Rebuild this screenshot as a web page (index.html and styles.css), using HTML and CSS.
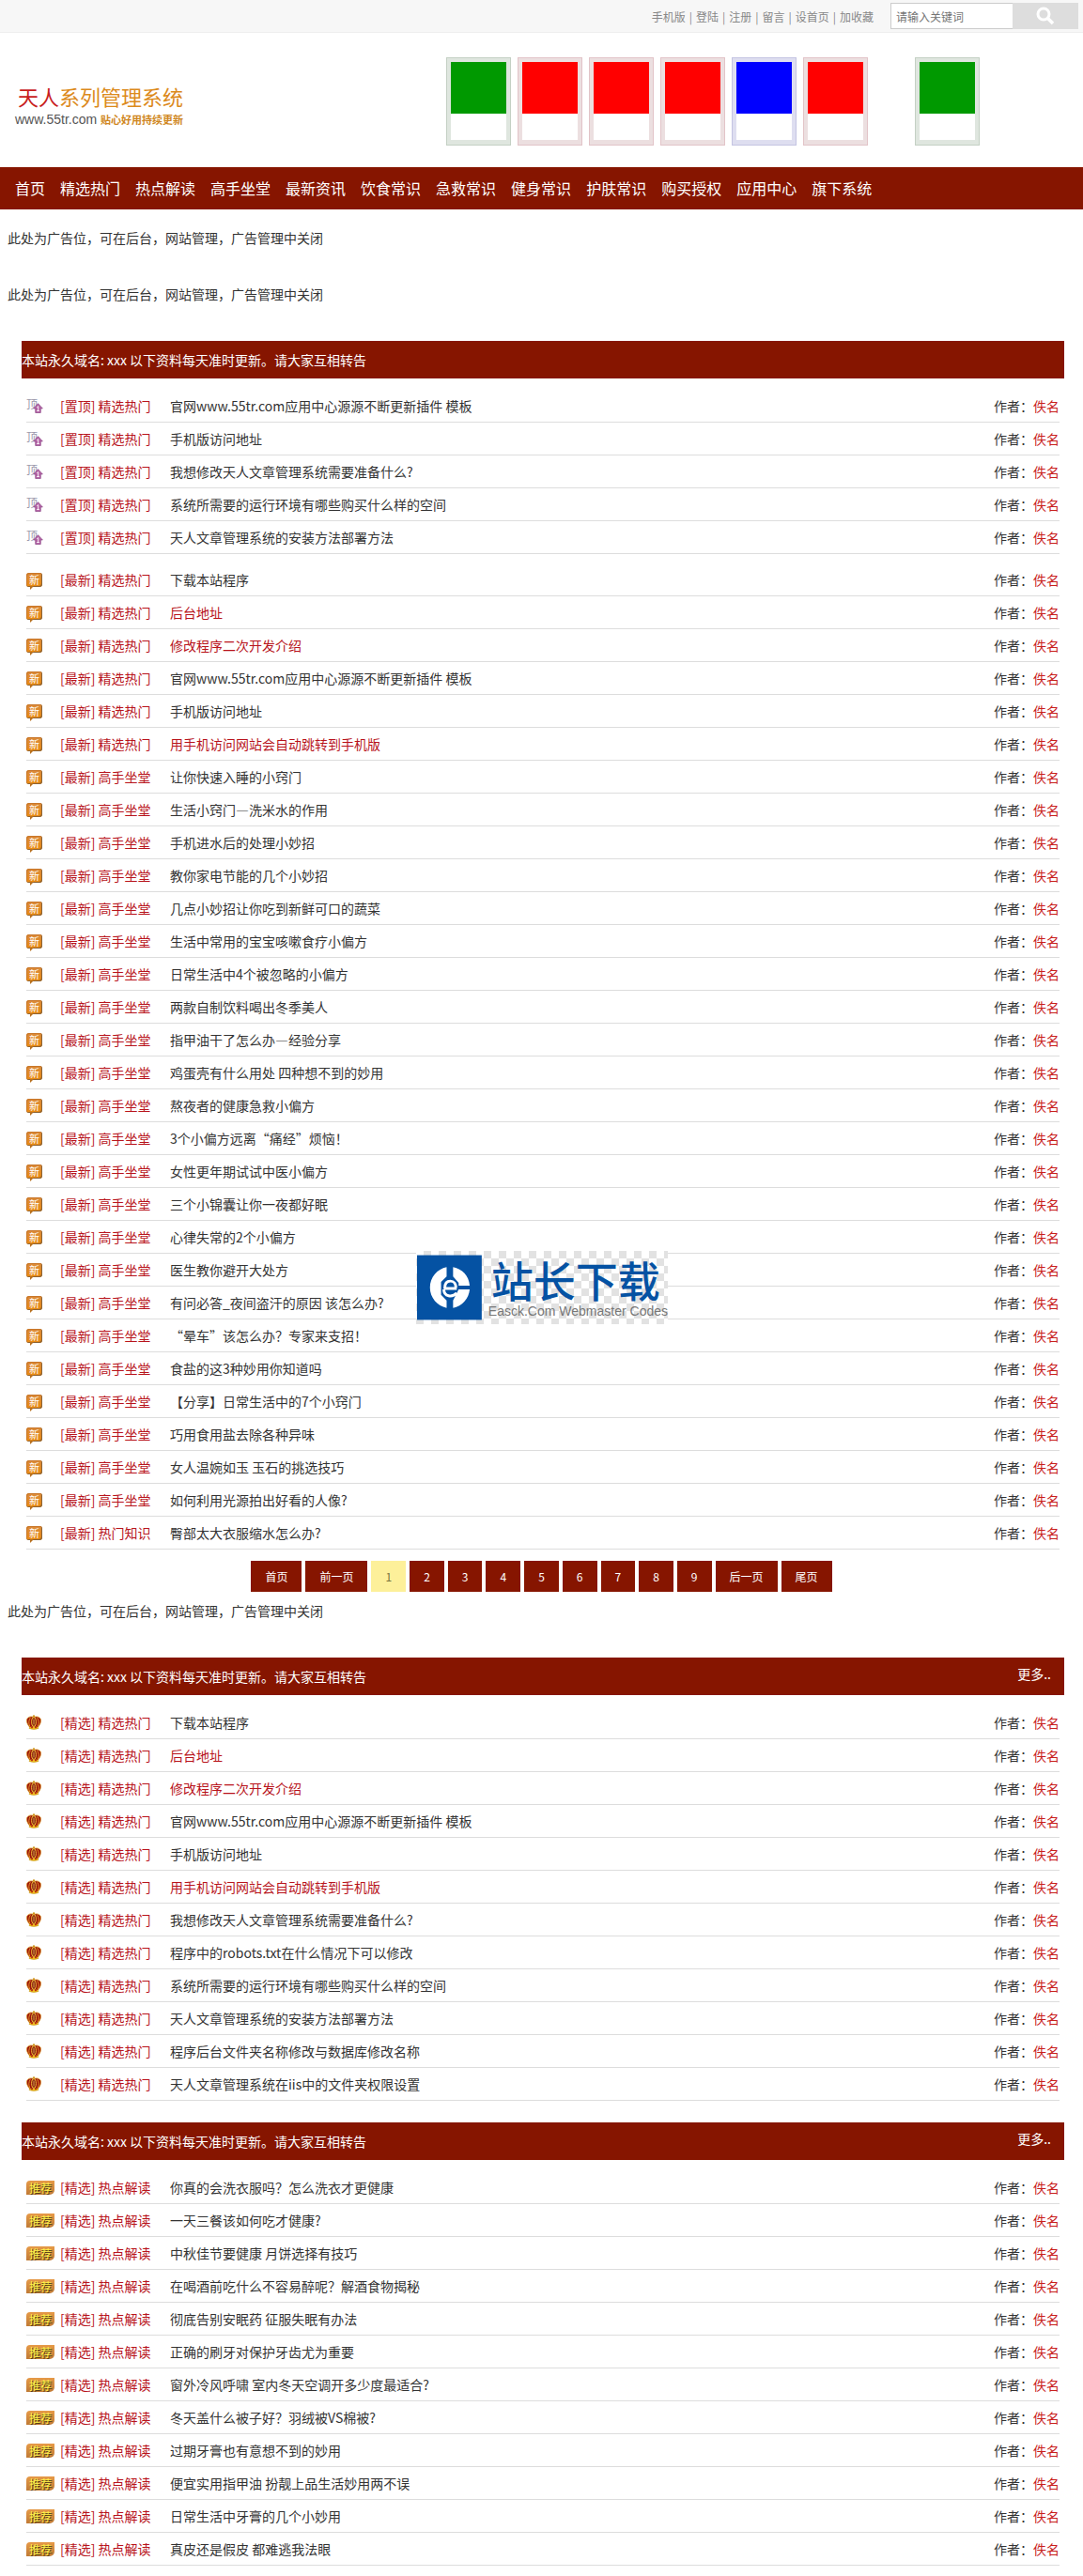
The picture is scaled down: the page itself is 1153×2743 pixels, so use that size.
FILE: index.html
```html
<!DOCTYPE html>
<html lang="zh-CN">
<head>
    <meta charset="UTF-8">
    <meta name="viewport" content="width=device-width, initial-scale=1.0">
    <title>天人系列管理系统</title>
    <link rel="stylesheet" href="styles.css">
</head>
<body>
    <!-- iconos -->
    <svg class="sprite" aria-hidden="true">
        <symbol id="ico-up" viewBox="0 0 12 12">
            <path d="M6 .7 11.300 6.500H9v5H3v-5H.7z" fill="#b565a7" stroke="#8c4585" stroke-width=".8"/>
            <path d="M4.800 5l1.400-1v5M4.500 9.300h3" fill="none" stroke="#fff" stroke-width="1"/>
        </symbol>
        <symbol id="ico-crown" viewBox="0 0 16 16">
            <path d="M4 12h8l1 2.500q-5 2-10 0z" fill="#f2c21c" stroke="#b98a10" stroke-width=".5"/>
            <path d="M3.500 13C1.200 10.500-.2 7 .7 4.500 2 1.800 5.500 1.300 8 2.500c2.500-1.200 6-.7 7.300 2 .9 2.500-.5 6-2.800 8.500z" fill="#9c120c" stroke="#e0a020" stroke-width=".7"/>
            <path d="M3.700 12C2.300 9 2.500 6 4.300 3.200M12.300 12c1.400-3 1.200-6-.6-8.800" fill="none" stroke="#f0b828" stroke-width=".8"/>
            <ellipse cx="8" cy="7.500" rx="2.300" ry="4.800" fill="#7c0d08" stroke="#f6cc3c" stroke-width="1"/>
            <path d="M8 4.500v6" stroke="#f8de6a" stroke-width=".8"/>
            <circle cx="8" cy="1.300" r="1.100" fill="#c98f12"/>
            <path d="M5 13.700h2M9 13.700h2" stroke="#b3160c"/>
        </symbol>
    </svg>

    <div class="topbar">
        <div class="toplinks">
            <a href="#">手机版</a><span>|</span><a href="#">登陆</a><span>|</span><a href="#">注册</a><span>|</span><a href="#">留言</a><span>|</span><a href="#">设首页</a><span>|</span><a href="#">加收藏</a>
        </div>
        <form class="search">
            <input type="text" placeholder="请输入关键词" aria-label="请输入关键词">
            <button type="button" aria-label="搜索">
                <svg width="20" height="20" viewBox="0 0 20 20"><circle cx="8" cy="8" r="6" fill="none" stroke="#fff" stroke-width="3"/><path d="M12.500 12.500 18 18" stroke="#fff" stroke-width="3.500"/></svg>
            </button>
        </form>
    </div>

    <div class="header">
        <div class="logo">
            <div class="logo-name"><span>天人</span>系列管理系统</div>
            <div class="logo-sub">www.55tr.com <b>贴心好用持续更新</b></div>
        </div>
        <div class="cards">
            <div class="card green"><i></i></div>
            <div class="card red"><i></i></div>
            <div class="card red"><i></i></div>
            <div class="card red"><i></i></div>
            <div class="card blue"><i></i></div>
            <div class="card red"><i></i></div>
            <div class="card green last"><i></i></div>
        </div>
    </div>

    <div class="nav">
        <a href="#">首页</a>
        <a href="#">精选热门</a>
        <a href="#">热点解读</a>
        <a href="#">高手坐堂</a>
        <a href="#">最新资讯</a>
        <a href="#">饮食常识</a>
        <a href="#">急救常识</a>
        <a href="#">健身常识</a>
        <a href="#">护肤常识</a>
        <a href="#">购买授权</a>
        <a href="#">应用中心</a>
        <a href="#">旗下系统</a>
    </div>

    <div class="main">
        <div class="ad">此处为广告位，可在后台，网站管理，广告管理中关闭</div>
        <div class="ad">此处为广告位，可在后台，网站管理，广告管理中关闭</div>

        <div class="panel">
            <div class="title"><h2>本站永久域名: xxx 以下资料每天准时更新。请大家互相转告</h2></div>
            <ul class="list">
                <li><i class="ico top">顶<svg><use href="#ico-up"/></svg></i><a class="cat" href="#">[置顶] 精选热门</a><a class="name" href="#">官网www.55tr.com应用中心源源不断更新插件 模板</a><span class="author">作者：<a href="#">佚名</a></span></li>
                <li><i class="ico top">顶<svg><use href="#ico-up"/></svg></i><a class="cat" href="#">[置顶] 精选热门</a><a class="name" href="#">手机版访问地址</a><span class="author">作者：<a href="#">佚名</a></span></li>
                <li><i class="ico top">顶<svg><use href="#ico-up"/></svg></i><a class="cat" href="#">[置顶] 精选热门</a><a class="name" href="#">我想修改天人文章管理系统需要准备什么?</a><span class="author">作者：<a href="#">佚名</a></span></li>
                <li><i class="ico top">顶<svg><use href="#ico-up"/></svg></i><a class="cat" href="#">[置顶] 精选热门</a><a class="name" href="#">系统所需要的运行环境有哪些购买什么样的空间</a><span class="author">作者：<a href="#">佚名</a></span></li>
                <li><i class="ico top">顶<svg><use href="#ico-up"/></svg></i><a class="cat" href="#">[置顶] 精选热门</a><a class="name" href="#">天人文章管理系统的安装方法部署方法</a><span class="author">作者：<a href="#">佚名</a></span></li>
            </ul>
            <ul class="list latest">
                <li><i class="ico new">新</i><a class="cat" href="#">[最新] 精选热门</a><a class="name" href="#">下载本站程序</a><span class="author">作者：<a href="#">佚名</a></span></li>
                <li><i class="ico new">新</i><a class="cat" href="#">[最新] 精选热门</a><a class="name hot" href="#">后台地址</a><span class="author">作者：<a href="#">佚名</a></span></li>
                <li><i class="ico new">新</i><a class="cat" href="#">[最新] 精选热门</a><a class="name hot" href="#">修改程序二次开发介绍</a><span class="author">作者：<a href="#">佚名</a></span></li>
                <li><i class="ico new">新</i><a class="cat" href="#">[最新] 精选热门</a><a class="name" href="#">官网www.55tr.com应用中心源源不断更新插件 模板</a><span class="author">作者：<a href="#">佚名</a></span></li>
                <li><i class="ico new">新</i><a class="cat" href="#">[最新] 精选热门</a><a class="name" href="#">手机版访问地址</a><span class="author">作者：<a href="#">佚名</a></span></li>
                <li><i class="ico new">新</i><a class="cat" href="#">[最新] 精选热门</a><a class="name hot" href="#">用手机访问网站会自动跳转到手机版</a><span class="author">作者：<a href="#">佚名</a></span></li>
                <li><i class="ico new">新</i><a class="cat" href="#">[最新] 高手坐堂</a><a class="name" href="#">让你快速入睡的小窍门</a><span class="author">作者：<a href="#">佚名</a></span></li>
                <li><i class="ico new">新</i><a class="cat" href="#">[最新] 高手坐堂</a><a class="name" href="#">生活小窍门—洗米水的作用</a><span class="author">作者：<a href="#">佚名</a></span></li>
                <li><i class="ico new">新</i><a class="cat" href="#">[最新] 高手坐堂</a><a class="name" href="#">手机进水后的处理小妙招</a><span class="author">作者：<a href="#">佚名</a></span></li>
                <li><i class="ico new">新</i><a class="cat" href="#">[最新] 高手坐堂</a><a class="name" href="#">教你家电节能的几个小妙招</a><span class="author">作者：<a href="#">佚名</a></span></li>
                <li><i class="ico new">新</i><a class="cat" href="#">[最新] 高手坐堂</a><a class="name" href="#">几点小妙招让你吃到新鲜可口的蔬菜</a><span class="author">作者：<a href="#">佚名</a></span></li>
                <li><i class="ico new">新</i><a class="cat" href="#">[最新] 高手坐堂</a><a class="name" href="#">生活中常用的宝宝咳嗽食疗小偏方</a><span class="author">作者：<a href="#">佚名</a></span></li>
                <li><i class="ico new">新</i><a class="cat" href="#">[最新] 高手坐堂</a><a class="name" href="#">日常生活中4个被忽略的小偏方</a><span class="author">作者：<a href="#">佚名</a></span></li>
                <li><i class="ico new">新</i><a class="cat" href="#">[最新] 高手坐堂</a><a class="name" href="#">两款自制饮料喝出冬季美人</a><span class="author">作者：<a href="#">佚名</a></span></li>
                <li><i class="ico new">新</i><a class="cat" href="#">[最新] 高手坐堂</a><a class="name" href="#">指甲油干了怎么办—经验分享</a><span class="author">作者：<a href="#">佚名</a></span></li>
                <li><i class="ico new">新</i><a class="cat" href="#">[最新] 高手坐堂</a><a class="name" href="#">鸡蛋壳有什么用处 四种想不到的妙用</a><span class="author">作者：<a href="#">佚名</a></span></li>
                <li><i class="ico new">新</i><a class="cat" href="#">[最新] 高手坐堂</a><a class="name" href="#">熬夜者的健康急救小偏方</a><span class="author">作者：<a href="#">佚名</a></span></li>
                <li><i class="ico new">新</i><a class="cat" href="#">[最新] 高手坐堂</a><a class="name" href="#">3个小偏方远离“痛经”烦恼！</a><span class="author">作者：<a href="#">佚名</a></span></li>
                <li><i class="ico new">新</i><a class="cat" href="#">[最新] 高手坐堂</a><a class="name" href="#">女性更年期试试中医小偏方</a><span class="author">作者：<a href="#">佚名</a></span></li>
                <li><i class="ico new">新</i><a class="cat" href="#">[最新] 高手坐堂</a><a class="name" href="#">三个小锦囊让你一夜都好眠</a><span class="author">作者：<a href="#">佚名</a></span></li>
                <li><i class="ico new">新</i><a class="cat" href="#">[最新] 高手坐堂</a><a class="name" href="#">心律失常的2个小偏方</a><span class="author">作者：<a href="#">佚名</a></span></li>
                <li><i class="ico new">新</i><a class="cat" href="#">[最新] 高手坐堂</a><a class="name" href="#">医生教你避开大处方</a><span class="author">作者：<a href="#">佚名</a></span></li>
                <li><i class="ico new">新</i><a class="cat" href="#">[最新] 高手坐堂</a><a class="name" href="#">有问必答_夜间盗汗的原因 该怎么办?</a><span class="author">作者：<a href="#">佚名</a></span></li>
                <li><i class="ico new">新</i><a class="cat" href="#">[最新] 高手坐堂</a><a class="name" href="#">“晕车”该怎么办？专家来支招！</a><span class="author">作者：<a href="#">佚名</a></span></li>
                <li><i class="ico new">新</i><a class="cat" href="#">[最新] 高手坐堂</a><a class="name" href="#">食盐的这3种妙用你知道吗</a><span class="author">作者：<a href="#">佚名</a></span></li>
                <li><i class="ico new">新</i><a class="cat" href="#">[最新] 高手坐堂</a><a class="name" href="#">【分享】日常生活中的7个小窍门</a><span class="author">作者：<a href="#">佚名</a></span></li>
                <li><i class="ico new">新</i><a class="cat" href="#">[最新] 高手坐堂</a><a class="name" href="#">巧用食用盐去除各种异味</a><span class="author">作者：<a href="#">佚名</a></span></li>
                <li><i class="ico new">新</i><a class="cat" href="#">[最新] 高手坐堂</a><a class="name" href="#">女人温婉如玉 玉石的挑选技巧</a><span class="author">作者：<a href="#">佚名</a></span></li>
                <li><i class="ico new">新</i><a class="cat" href="#">[最新] 高手坐堂</a><a class="name" href="#">如何利用光源拍出好看的人像?</a><span class="author">作者：<a href="#">佚名</a></span></li>
                <li><i class="ico new">新</i><a class="cat" href="#">[最新] 热门知识</a><a class="name" href="#">臀部太大衣服缩水怎么办?</a><span class="author">作者：<a href="#">佚名</a></span></li>
            </ul>
            <div class="stamp">
                <svg width="70" height="70" viewBox="0 0 70 70">
                    <rect width="70" height="70" fill="#0552a3"/>
                    <path d="M32 13C22 15 14 24 14 35s8 20 18 22v-8l-6-6V29l6-6z" fill="#fff"/>
                    <path d="M39 13v10l6 7v3h12C56 22 49 15 39 13zM57 37H45l-6 12v8c10-2 17-10 18-20z" fill="#fff"/>
                    <path d="M43 36H29M30 36c0-5 2-8 6-8s6 3 6 7M29 37c0 8 9 9 14 4" fill="none" stroke="#fff" stroke-width="3"/>
                </svg>
                <div class="stamp-text">
                    <strong>站长下载</strong>
                    <span>Easck.Com Webmaster Codes</span>
                </div>
            </div>
        </div>

        <div class="pager">
            <a href="#">首页</a>
            <a href="#">前一页</a>
            <a href="#" class="on">1</a>
            <a href="#">2</a>
            <a href="#">3</a>
            <a href="#">4</a>
            <a href="#">5</a>
            <a href="#">6</a>
            <a href="#">7</a>
            <a href="#">8</a>
            <a href="#">9</a>
            <a href="#">后一页</a>
            <a href="#">尾页</a>
        </div>

        <div class="ad">此处为广告位，可在后台，网站管理，广告管理中关闭</div>

        <div class="panel">
            <div class="title"><h2>本站永久域名: xxx 以下资料每天准时更新。请大家互相转告</h2><a href="#">更多..</a></div>
            <ul class="list">
                <li><svg class="ico"><use href="#ico-crown"/></svg><a class="cat" href="#">[精选] 精选热门</a><a class="name" href="#">下载本站程序</a><span class="author">作者：<a href="#">佚名</a></span></li>
                <li><svg class="ico"><use href="#ico-crown"/></svg><a class="cat" href="#">[精选] 精选热门</a><a class="name hot" href="#">后台地址</a><span class="author">作者：<a href="#">佚名</a></span></li>
                <li><svg class="ico"><use href="#ico-crown"/></svg><a class="cat" href="#">[精选] 精选热门</a><a class="name hot" href="#">修改程序二次开发介绍</a><span class="author">作者：<a href="#">佚名</a></span></li>
                <li><svg class="ico"><use href="#ico-crown"/></svg><a class="cat" href="#">[精选] 精选热门</a><a class="name" href="#">官网www.55tr.com应用中心源源不断更新插件 模板</a><span class="author">作者：<a href="#">佚名</a></span></li>
                <li><svg class="ico"><use href="#ico-crown"/></svg><a class="cat" href="#">[精选] 精选热门</a><a class="name" href="#">手机版访问地址</a><span class="author">作者：<a href="#">佚名</a></span></li>
                <li><svg class="ico"><use href="#ico-crown"/></svg><a class="cat" href="#">[精选] 精选热门</a><a class="name hot" href="#">用手机访问网站会自动跳转到手机版</a><span class="author">作者：<a href="#">佚名</a></span></li>
                <li><svg class="ico"><use href="#ico-crown"/></svg><a class="cat" href="#">[精选] 精选热门</a><a class="name" href="#">我想修改天人文章管理系统需要准备什么?</a><span class="author">作者：<a href="#">佚名</a></span></li>
                <li><svg class="ico"><use href="#ico-crown"/></svg><a class="cat" href="#">[精选] 精选热门</a><a class="name" href="#">程序中的robots.txt在什么情况下可以修改</a><span class="author">作者：<a href="#">佚名</a></span></li>
                <li><svg class="ico"><use href="#ico-crown"/></svg><a class="cat" href="#">[精选] 精选热门</a><a class="name" href="#">系统所需要的运行环境有哪些购买什么样的空间</a><span class="author">作者：<a href="#">佚名</a></span></li>
                <li><svg class="ico"><use href="#ico-crown"/></svg><a class="cat" href="#">[精选] 精选热门</a><a class="name" href="#">天人文章管理系统的安装方法部署方法</a><span class="author">作者：<a href="#">佚名</a></span></li>
                <li><svg class="ico"><use href="#ico-crown"/></svg><a class="cat" href="#">[精选] 精选热门</a><a class="name" href="#">程序后台文件夹名称修改与数据库修改名称</a><span class="author">作者：<a href="#">佚名</a></span></li>
                <li><svg class="ico"><use href="#ico-crown"/></svg><a class="cat" href="#">[精选] 精选热门</a><a class="name" href="#">天人文章管理系统在iis中的文件夹权限设置</a><span class="author">作者：<a href="#">佚名</a></span></li>
            </ul>
        </div>

        <div class="panel">
            <div class="title"><h2>本站永久域名: xxx 以下资料每天准时更新。请大家互相转告</h2><a href="#">更多..</a></div>
            <ul class="list">
                <li><i class="ico rec">推荐</i><a class="cat" href="#">[精选] 热点解读</a><a class="name" href="#">你真的会洗衣服吗？怎么洗衣才更健康</a><span class="author">作者：<a href="#">佚名</a></span></li>
                <li><i class="ico rec">推荐</i><a class="cat" href="#">[精选] 热点解读</a><a class="name" href="#">一天三餐该如何吃才健康?</a><span class="author">作者：<a href="#">佚名</a></span></li>
                <li><i class="ico rec">推荐</i><a class="cat" href="#">[精选] 热点解读</a><a class="name" href="#">中秋佳节要健康 月饼选择有技巧</a><span class="author">作者：<a href="#">佚名</a></span></li>
                <li><i class="ico rec">推荐</i><a class="cat" href="#">[精选] 热点解读</a><a class="name" href="#">在喝酒前吃什么不容易醉呢？解酒食物揭秘</a><span class="author">作者：<a href="#">佚名</a></span></li>
                <li><i class="ico rec">推荐</i><a class="cat" href="#">[精选] 热点解读</a><a class="name" href="#">彻底告别安眠药 征服失眠有办法</a><span class="author">作者：<a href="#">佚名</a></span></li>
                <li><i class="ico rec">推荐</i><a class="cat" href="#">[精选] 热点解读</a><a class="name" href="#">正确的刷牙对保护牙齿尤为重要</a><span class="author">作者：<a href="#">佚名</a></span></li>
                <li><i class="ico rec">推荐</i><a class="cat" href="#">[精选] 热点解读</a><a class="name" href="#">窗外冷风呼啸 室内冬天空调开多少度最适合?</a><span class="author">作者：<a href="#">佚名</a></span></li>
                <li><i class="ico rec">推荐</i><a class="cat" href="#">[精选] 热点解读</a><a class="name" href="#">冬天盖什么被子好？羽绒被VS棉被?</a><span class="author">作者：<a href="#">佚名</a></span></li>
                <li><i class="ico rec">推荐</i><a class="cat" href="#">[精选] 热点解读</a><a class="name" href="#">过期牙膏也有意想不到的妙用</a><span class="author">作者：<a href="#">佚名</a></span></li>
                <li><i class="ico rec">推荐</i><a class="cat" href="#">[精选] 热点解读</a><a class="name" href="#">便宜实用指甲油 扮靓上品生活妙用两不误</a><span class="author">作者：<a href="#">佚名</a></span></li>
                <li><i class="ico rec">推荐</i><a class="cat" href="#">[精选] 热点解读</a><a class="name" href="#">日常生活中牙膏的几个小妙用</a><span class="author">作者：<a href="#">佚名</a></span></li>
                <li><i class="ico rec">推荐</i><a class="cat" href="#">[精选] 热点解读</a><a class="name" href="#">真皮还是假皮 都难逃我法眼</a><span class="author">作者：<a href="#">佚名</a></span></li>
            </ul>
        </div>
    </div>
</body>
</html>
```

FILE: styles.css
```css
* {
    box-sizing: border-box;
}

body {
    font-family: "Noto Sans CJK SC", "Open Sans", sans-serif;
    font-size: 14px;
    margin: 0;
    padding: 0;
    color: #333;
    background-color: #fff;
}

a {
    color: inherit;
    text-decoration: none;
}

.sprite {
    position: absolute;
    width: 0;
    height: 0;
}

.topbar {
    display: flex;
    justify-content: flex-end;
    align-items: center;
    height: 35px;
    padding: 0 5px;
    background-color: #f7f7f7;
    border-bottom: 1px solid #eee;
}

.toplinks {
    margin-right: 18px;
    font-size: 12px;
    color: #888;
}

.toplinks span {
    padding: 0 4px;
}

.search {
    display: flex;
    width: 200px;
    height: 28px;
}

.search input {
    flex: 1;
    min-width: 0;
    padding: 0 5px;
    border: 1px solid #ccc;
    border-right: none;
    background-color: #fff;
    font-family: inherit;
    font-size: 12px;
}

.search input::placeholder {
    color: #757575;
}

.search button {
    display: flex;
    justify-content: center;
    align-items: center;
    width: 70px;
    padding: 0;
    border: none;
    background-color: #ddd;
    cursor: pointer;
}

.header {
    display: flex;
    justify-content: space-between;
    align-items: center;
    padding: 26px 110px 23px 16px;
}

.logo {
    padding-top: 8px;
}

.logo-name {
    padding-left: 3px;
    font-size: 22px;
    line-height: 30px;
    color: #dc8a1c;
}

.logo-name span {
    color: #c8201c;
}

.logo-sub {
    font-family: "Liberation Sans", "Noto Sans CJK SC", sans-serif;
    font-size: 14px;
    line-height: 20px;
    color: #555;
}

.logo-sub b {
    font-size: 11px;
    color: #cf8620;
}

.cards {
    display: flex;
    gap: 7px;
}

.card {
    width: 69px;
    height: 94px;
    padding: 4px 4px 5px;
    border: 1px solid #c4d0c4;
    background-color: #dfe6df;
}

.card i {
    display: block;
    height: 83px;
    border-bottom: 28px solid #fff;
    background-color: #090;
}

.card.red {
    border-color: #e2c4c8;
    background-color: #ecdfe0;
}

.card.red i {
    background-color: #f00;
}

.card.blue {
    border-color: #c4c4e2;
    background-color: #dedef0;
}

.card.blue i {
    background-color: #00f;
}

.card.last {
    margin-left: 43px;
}

.nav {
    display: flex;
    gap: 16px;
    padding: 0 16px;
    background-color: #861500;
    color: #fff;
    font-size: 16px;
    line-height: 45px;
}

.main {
    padding: 20px 0 11px;
}

.ad {
    padding: 0 8px 40px;
    line-height: 20px;
}

.panel {
    position: relative;
    margin: 0 20px 0 23px;
}

.panel + .panel {
    margin-top: 23px;
}

.title {
    display: flex;
    justify-content: space-between;
    height: 40px;
    padding-right: 14px;
    background-color: #861500;
    color: #fff;
}

.title h2 {
    margin: 0;
    font-size: 14px;
    font-weight: normal;
    line-height: 40px;
}

.title a {
    line-height: 34px;
}

.list {
    list-style: none;
    margin: 12px 0 0;
    padding: 0 5px;
}

.list.latest {
    margin-top: 10px;
}

.list li {
    display: flex;
    align-items: center;
    height: 35px;
    border-bottom: 1px solid #ddd;
}

.ico {
    flex: none;
    width: 16px;
    height: 16px;
    margin-right: 20px;
    font-style: normal;
    text-align: center;
}

.ico.top {
    position: relative;
    width: 18px;
    margin-right: 18px;
    font-size: 12px;
    line-height: 12px;
    text-align: left;
    color: #9a97aa;
}

.ico.top svg {
    position: absolute;
    right: 0;
    bottom: 0;
    width: 11px;
    height: 11px;
}

.ico.new {
    position: relative;
    width: 17px;
    height: 15px;
    margin-right: 19px;
    border-radius: 3px;
    background: linear-gradient(#d98a3c, #ea8a10);
    box-shadow: inset -1px -1px #8a6236, inset 1px 1px #c9772a;
    color: #fff;
    font-size: 11px;
    line-height: 14px;
}

.ico.new::after {
    content: "";
    position: absolute;
    left: 4px;
    top: 14px;
    border-top: 4px solid #b8701f;
    border-right: 4px solid transparent;
}

.ico.rec {
    width: 30px;
    height: 15px;
    margin-right: 6px;
    border-radius: 4px 0 5px 0;
    background: linear-gradient(#e69a48, #c07a36);
    color: #fff04a;
    font-size: 12px;
    line-height: 15px;
    text-shadow: 1px 1px #4c3a12;
}

.cat {
    width: 117px;
    color: #b8141c;
}

.name {
    flex: 1;
}

.name.hot {
    color: #b8141c;
}

.author a {
    color: #c8201c;
}

/* sello encima de la lista */
.stamp {
    position: absolute;
    top: 969px;
    left: 50%;
    display: flex;
    align-items: center;
    gap: 7px;
    width: 268px;
    height: 78px;
    margin-left: -135px;
    padding-left: 1px;
    background: repeating-conic-gradient(#e2e2e2 0 25%, #fff 0 50%) 0 0 / 16px 16px;
}

.stamp-text {
    display: flex;
    flex-direction: column;
    white-space: nowrap;
}

.stamp-text strong {
    padding-left: 3px;
    font-size: 45px;
    font-weight: 500;
    line-height: 50px;
    color: #0552a3;
}

.stamp-text span {
    font-family: "Liberation Sans", sans-serif;
    font-size: 14px;
    line-height: 16px;
    color: #777;
}

.pager {
    display: flex;
    justify-content: center;
    gap: 4px;
    margin: 12px 0 10px;
    font-size: 12px;
    line-height: 33px;
}

.pager a {
    padding: 0 15px;
    background-color: #861500;
    color: #fff;
}

.pager a.on {
    background-color: #fdf09a;
    color: #7a7340;
}
```
